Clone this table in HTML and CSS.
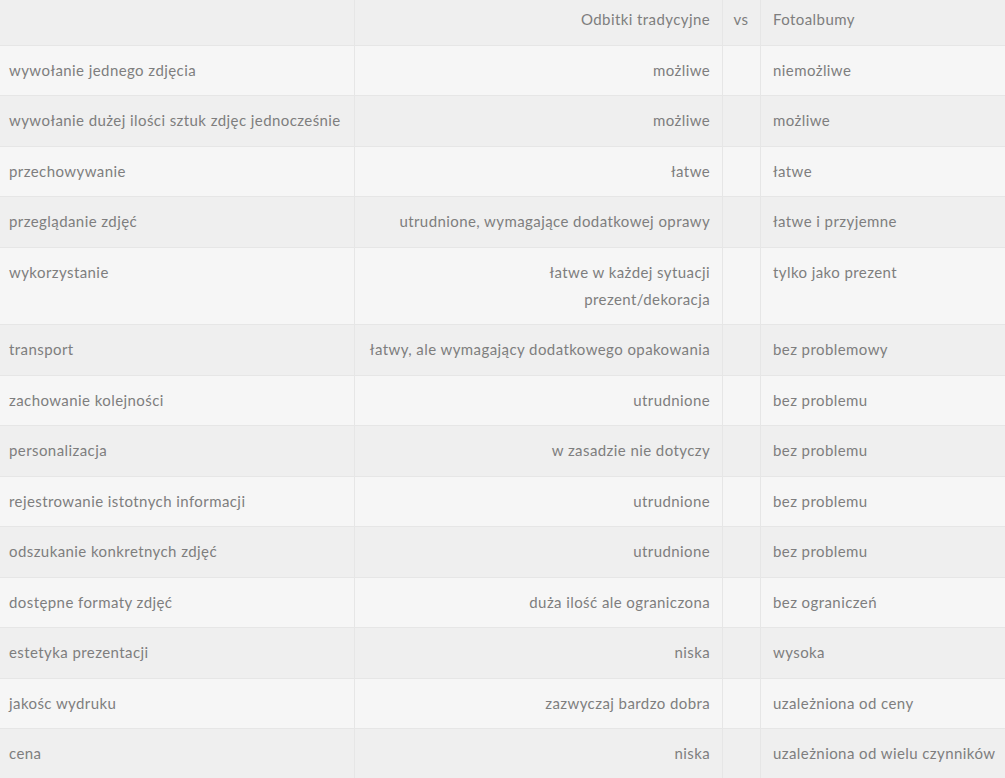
FILE: index.html
```html
<!DOCTYPE html>
<html lang="pl">
<head>
<meta charset="utf-8">
<link rel="stylesheet" href="styles.css">
</head>
<body>
<table class="cmp">
  <colgroup>
    <col class="c1"><col class="c2"><col class="c3"><col class="c4">
  </colgroup>
  <thead>
    <tr class="head"><th class="lbl"></th><th class="a">Odbitki tradycyjne</th><th class="vs">vs</th><th class="b">Fotoalbumy</th></tr>
  </thead>
  <tbody>
    <tr><td class="lbl">wywołanie jednego zdjęcia</td><td class="a">możliwe</td><td class="vs"></td><td class="b">niemożliwe</td></tr>
    <tr><td class="lbl">wywołanie dużej ilości sztuk zdjęc jednocześnie</td><td class="a">możliwe</td><td class="vs"></td><td class="b">możliwe</td></tr>
    <tr><td class="lbl">przechowywanie</td><td class="a">łatwe</td><td class="vs"></td><td class="b">łatwe</td></tr>
    <tr><td class="lbl">przeglądanie zdjęć</td><td class="a">utrudnione, wymagające dodatkowej oprawy</td><td class="vs"></td><td class="b">łatwe i przyjemne</td></tr>
    <tr><td class="lbl">wykorzystanie</td><td class="a">łatwe w każdej sytuacji<br>prezent/dekoracja</td><td class="vs"></td><td class="b">tylko jako prezent</td></tr>
    <tr><td class="lbl">transport</td><td class="a">łatwy, ale wymagający dodatkowego opakowania</td><td class="vs"></td><td class="b">bez problemowy</td></tr>
    <tr><td class="lbl">zachowanie kolejności</td><td class="a">utrudnione</td><td class="vs"></td><td class="b">bez problemu</td></tr>
    <tr><td class="lbl">personalizacja</td><td class="a">w zasadzie nie dotyczy</td><td class="vs"></td><td class="b">bez problemu</td></tr>
    <tr><td class="lbl">rejestrowanie istotnych informacji</td><td class="a">utrudnione</td><td class="vs"></td><td class="b">bez problemu</td></tr>
    <tr><td class="lbl">odszukanie konkretnych zdjęć</td><td class="a">utrudnione</td><td class="vs"></td><td class="b">bez problemu</td></tr>
    <tr><td class="lbl">dostępne formaty zdjęć</td><td class="a">duża ilość ale ograniczona</td><td class="vs"></td><td class="b">bez ograniczeń</td></tr>
    <tr><td class="lbl">estetyka prezentacji</td><td class="a">niska</td><td class="vs"></td><td class="b">wysoka</td></tr>
    <tr><td class="lbl">jakośc wydruku</td><td class="a">zazwyczaj bardzo dobra</td><td class="vs"></td><td class="b">uzależniona od ceny</td></tr>
    <tr><td class="lbl">cena</td><td class="a">niska</td><td class="vs"></td><td class="b">uzależniona od wielu czynników</td></tr>
  </tbody>
</table>
</body>
</html>
```

FILE: styles.css
```css
html, body {
  margin: 0;
  padding: 0;
  background: #f5f5f5;
  overflow: hidden;
}
.cmp {
  width: 1005px;
  border-collapse: collapse;
  table-layout: fixed;
  font-family: "Lato", "Open Sans", sans-serif;
  font-size: 15px;
  line-height: 27px;
  letter-spacing: 0.42px;
  color: #7e7e7e;
}
.c1 { width: 354px; }
.c2 { width: 368px; }
.c3 { width: 38px; }
.c4 { width: 245px; }
.cmp th, .cmp td {
  padding: 11.25px 12px;
  vertical-align: top;
  font-weight: 400;
  border-left: 1px solid #e6e6e6;
  border-bottom: 1px solid #e6e6e6;
  white-space: nowrap;
}
.cmp th:first-child, .cmp td:first-child { border-left: 0; }
.cmp .head th {
  padding-top: 6.25px;
  background: #efefef;
}
.cmp tbody tr:nth-child(odd) td { background: #f6f6f6; }
.cmp tbody tr:nth-child(even) td { background: #efefef; }
.cmp .lbl { text-align: left; padding-left: 9px; }
.cmp .a { text-align: right; padding-right: 11.4px; }
.cmp .vs { text-align: center; padding-left: 0; padding-right: 0; }
.cmp .b { text-align: left; padding-left: 12.5px; }
```
